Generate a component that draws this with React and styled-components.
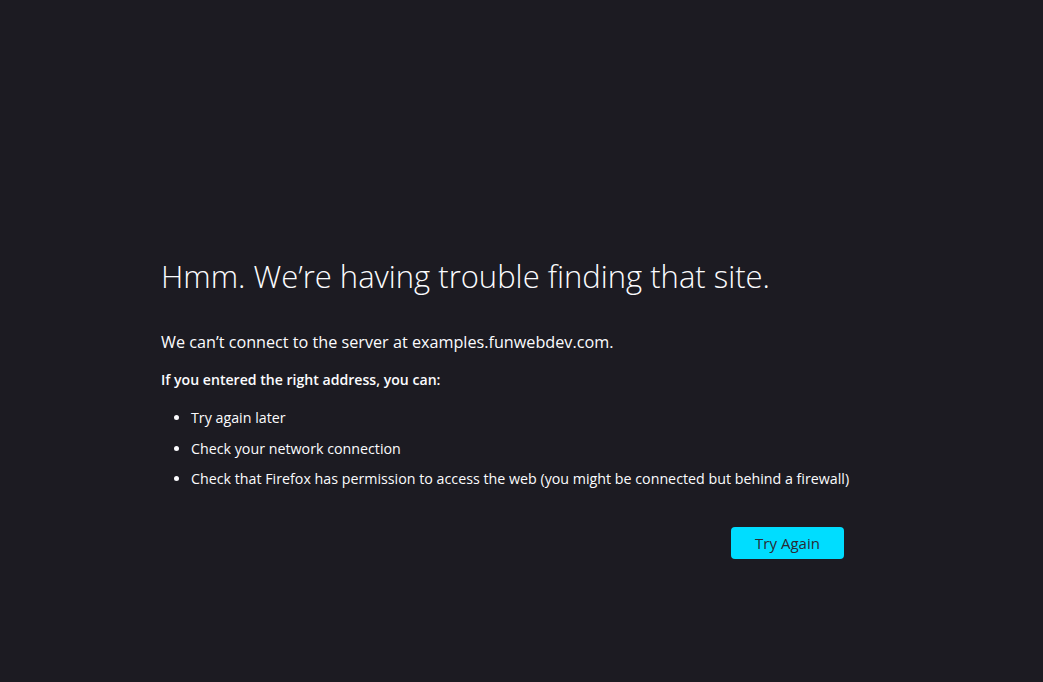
import React from 'react'
import styled, { createGlobalStyle } from 'styled-components'

const GlobalStyle = createGlobalStyle`
  html, body {
    margin: 0;
    padding: 0;
    background: #1c1b22;
    color: #fbfbfe;
    font-family: "Open Sans", "Noto Sans", sans-serif;
  }
`;

const Page = styled.main`
  min-height: 682px;
  box-sizing: border-box;
  padding: 252px 0 0 161px;
`;

const Container = styled.div`
  width: 683px;
  display: flex;
  flex-direction: column;
`;

const Title = styled.h1`
  margin: 0;
  font-size: 31px;
  font-weight: 300;
  line-height: 48px;
`;

const Intro = styled.p`
  margin: 30px 0 0;
  font-size: 16.2px;
  line-height: 24px;
`;

const Heading = styled.p`
  margin: 16px 0 0;
  font-size: 14.1px;
  font-weight: 600;
  line-height: 20px;
`;

const List = styled.ul`
  margin: 18px 0 0;
  padding: 0 0 0 30px;
`;

const Item = styled.li`
  font-size: 14.25px;
  line-height: 20px;
  margin-bottom: 10.5px;
  white-space: nowrap;
`;

const Actions = styled.div`
  display: flex;
  justify-content: flex-end;
  margin-top: 27px;
`;

const Button = styled.button`
  height: 32px;
  width: 113px;
  border: none;
  border-radius: 4px;
  background: #00ddff;
  color: #2b2a33;
  font-family: inherit;
  font-size: 15px;
  font-weight: 500;
  cursor: pointer;
`;

export default function App() {
  const tips = [
    'Try again later',
    'Check your network connection',
    'Check that Firefox has permission to access the web (you might be connected but behind a firewall)',
  ]
  return (
    <>
      <GlobalStyle />
      <Page>
        <Container>
          <Title>Hmm. We’re having trouble finding that site.</Title>
          <Intro>We can’t connect to the server at examples.funwebdev.com.</Intro>
          <Heading>If you entered the right address, you can:</Heading>
          <List>
            {tips.map(t => <Item key={t}>{t}</Item>)}
          </List>
          <Actions>
            <Button>Try Again</Button>
          </Actions>
        </Container>
      </Page>
    </>
  )
}
